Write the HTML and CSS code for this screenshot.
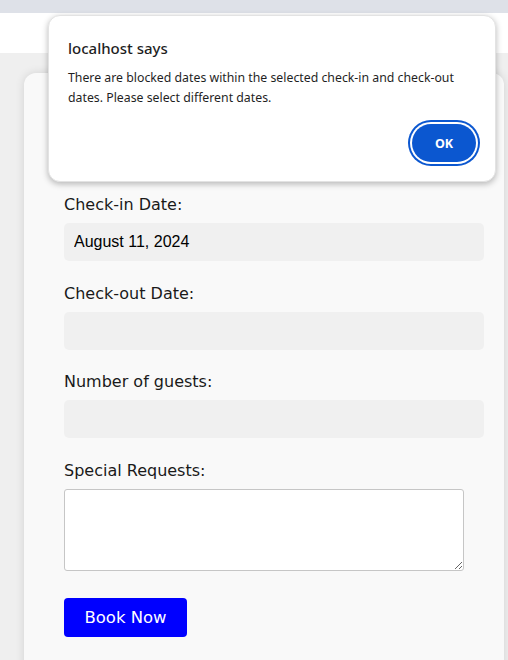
FILE: index.html
```html
<!DOCTYPE html>
<html lang="en">
<head>
<meta charset="utf-8">
<title>Booking</title>
<link rel="stylesheet" href="styles.css">
</head>
<body>
<div class="browser-strip"></div>
<header class="site-header"></header>
<main class="page">
  <form class="booking-card">
    <div class="field">
      <label class="field-label" for="checkin">Check-in Date:</label>
      <input class="field-input" id="checkin" type="text" value="August 11, 2024">
    </div>
    <div class="field">
      <label class="field-label" for="checkout">Check-out Date:</label>
      <input class="field-input" id="checkout" type="text" value="">
    </div>
    <div class="field">
      <label class="field-label" for="guests">Number of guests:</label>
      <input class="field-input" id="guests" type="text" value="">
    </div>
    <div class="field">
      <label class="field-label" for="requests">Special Requests:</label>
      <textarea class="field-textarea" id="requests"></textarea>
    </div>
    <button class="book-btn" type="button">Book Now</button>
  </form>
</main>
<div class="alert" role="alertdialog">
  <div class="alert-title">localhost says</div>
  <div class="alert-message">There are blocked dates within the selected check-in and check-out dates. Please select different dates.</div>
  <div class="alert-actions">
    <button class="alert-ok" type="button">OK</button>
  </div>
</div>
</body>
</html>
```

FILE: styles.css
```css
html, body {
  margin: 0;
  padding: 0;
}
body {
  width: 508px;
  height: 660px;
  overflow: hidden;
  background: #efefef;
  font-family: "DejaVu Sans", sans-serif;
  position: relative;
}
.browser-strip {
  height: 13px;
  background: #dee1e8;
}
.site-header {
  height: 40px;
  background: #ffffff;
}
.page {
  padding: 20px 4px 0 24px;
  height: 587px;
  overflow: hidden;
}
.booking-card {
  width: 480px;
  min-height: 640px;
  box-sizing: border-box;
  background: #f9f9f9;
  border-radius: 12px;
  box-shadow: 0 0 10px rgba(0, 0, 0, 0.12);
  padding: 122px 20px 0 40px;
  display: flex;
  flex-direction: column;
  align-items: flex-start;
}
.field {
  display: flex;
  flex-direction: column;
  align-items: flex-start;
  margin-bottom: 22.67px;
}
.field-label {
  font-size: 16px;
  line-height: 20px;
  color: #1a1a1a;
  margin-bottom: 8px;
}
.field-input {
  width: 420px;
  height: 38px;
  box-sizing: border-box;
  border: none;
  border-radius: 5px;
  background: #f0f0f0;
  padding: 0 10px;
  font-family: "Liberation Sans", Arial, sans-serif;
  font-size: 16px;
  color: #000;
  outline: none;
}
.field-textarea {
  width: 400px;
  height: 82px;
  box-sizing: border-box;
  border: 1px solid #c6c6c6;
  border-radius: 3px;
  background: #ffffff;
  margin: 0;
  display: block;
  font-family: "Liberation Sans", Arial, sans-serif;
}
.field:last-of-type {
  margin-bottom: 27px;
}
.book-btn {
  width: 123px;
  height: 39px;
  border: none;
  border-radius: 4px;
  background: #0000ff;
  color: #ffffff;
  font-family: "DejaVu Sans", sans-serif;
  font-size: 16.5px;
  padding: 0;
}
.alert {
  position: absolute;
  left: 48px;
  top: 15px;
  width: 448px;
  height: 167px;
  box-sizing: border-box;
  background: #ffffff;
  border: 1px solid #e3e3e3;
  border-radius: 12px;
  box-shadow: 0 2px 6px rgba(0, 0, 0, 0.28);
  padding: 22px 15px 0 19px;
  font-family: "Noto Sans", sans-serif;
  color: #1f1f1f;
  display: flex;
  flex-direction: column;
}
.alert-title {
  font-size: 15px;
  line-height: 20px;
  font-weight: 500;
}
.alert-message {
  margin-top: 10px;
  max-width: 400px;
  font-size: 12.3px;
  line-height: 20px;
}
.alert-actions {
  display: flex;
  justify-content: flex-end;
  margin-top: 16px;
}
.alert-ok {
  width: 64px;
  height: 38px;
  border: none;
  border-radius: 19px;
  background: #0b57d0;
  color: #ffffff;
  font-family: "Noto Sans", sans-serif;
  font-weight: 700;
  font-size: 12.5px;
  margin-right: 4px;
  box-shadow: 0 0 0 2px #ffffff, 0 0 0 4px #0b57d0;
  padding: 0;
}
```
